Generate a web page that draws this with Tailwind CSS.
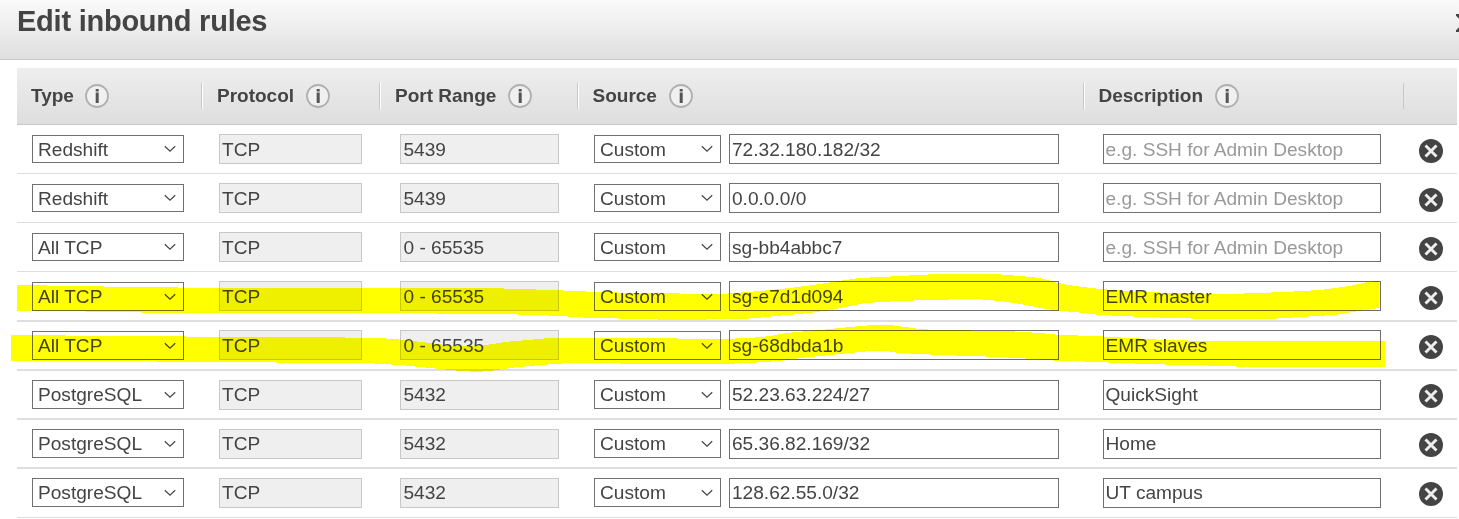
<!DOCTYPE html>
<html lang="en">
<head>
<meta charset="utf-8">
<title>Edit inbound rules</title>
<script src="https://cdn.jsdelivr.net/npm/@tailwindcss/browser@4"></script>
</head>
<body class="relative h-[519px] w-[1459px] overflow-hidden bg-white font-['Liberation_Sans',Arial,sans-serif] text-[#444]">
<svg class="hidden">
  <symbol id="info" viewBox="0 0 24 24"><circle cx="12" cy="12" r="11" fill="#f0f0f0" stroke="#b0b0b0" stroke-width="1.800"/><rect x="10.700" y="5" width="3" height="2.500" fill="#555"/><rect x="10.700" y="8.500" width="3" height="10.500" fill="#555"/></symbol>
  <symbol id="remove" viewBox="0 0 24 24"><circle cx="12" cy="12" r="12" fill="#444"/><path d="M6.500 6.500l11 11M17.500 6.500l-11 11" stroke="#eee" stroke-width="2.900"/></symbol>
  <symbol id="chevron" viewBox="0 0 12 8"><path d="M.8 1.200L6 6.200l5.200-5" fill="none" stroke="#444" stroke-width="1.200"/></symbol>
</svg>
<header class="flex h-15 justify-between border-b border-[#c8c8c8] bg-linear-to-b from-[#fafafa] to-[#dfdfdf] pl-[17px]">
  <h1 class="pt-1 text-[29px] leading-[34px] font-bold tracking-[-0.24px] whitespace-nowrap">Edit inbound rules</h1>
  <svg class="mt-3.5 -mr-4 h-[18px] w-[19px] shrink-0" viewBox="0 0 19 18"><path d="M0 -1l20 20M20 -1l-20 20" stroke="#444" stroke-width="4"/></svg>
</header>
<main class="mt-2 ml-[17px] w-[1440px]">
  <div class="grid h-[57px] grid-cols-[186px_178px_198px_506px_319px_53px] border-b border-[#c8c8c8] bg-linear-to-b from-[#eee] to-[#dedede] pt-[15px] text-[19px] leading-[26px] font-bold whitespace-nowrap">
    <div class="flex h-[26px] border-r border-white"><div class="flex w-full gap-[11px] border-r border-[#c8c8c8] pl-3.5"><span>Type</span><svg class="mt-px size-6"><use href="#info"/></svg></div></div>
    <div class="flex h-[26px] border-r border-white"><div class="flex w-full gap-3 border-r border-[#c8c8c8] pl-3.5"><span>Protocol</span><svg class="mt-px size-6"><use href="#info"/></svg></div></div>
    <div class="flex h-[26px] border-r border-white"><div class="flex w-full gap-3 border-r border-[#c8c8c8] pl-3.5"><span>Port Range</span><svg class="mt-px size-6"><use href="#info"/></svg></div></div>
    <div class="flex h-[26px] border-r border-white"><div class="flex w-full gap-3 border-r border-[#c8c8c8] pl-[13.500px]"><span>Source</span><svg class="mt-px size-6"><use href="#info"/></svg></div></div>
    <div class="flex h-[26px] gap-3 border-r border-[#c8c8c8] pl-[13.500px]"><span>Description</span><svg class="mt-px size-6"><use href="#info"/></svg></div>
  </div>
  <div id="rules"></div>
</main>
<svg class="absolute inset-0 mix-blend-multiply" width="1459" height="519" fill="#ff0" shape-rendering="crispEdges">
  <polygon points="17,285 47,285 47,286 104,286 104,287 178,287 178,288 487,288 521,289 550,290 577,291 594,292 640,293 720,294 735,293 760,291 790,288 820,284 838,281 860,278 880,277 937,274 995,274 1020,276 1040,278 1058,283 1075,286 1100,289 1140,292 1178,293 1230,294 1285,292 1320,290 1350,286 1367,282 1379,281 1379,308 1365,310 1335,315 1300,317 1271,319 1206,319 1145,317 1100,315 1075,312 1060,311 1040,308 1020,304 1000,301 975,299 925,300 900,301 865,303 850,306 830,310 810,313 787,315 745,319 668,320 645,319 590,318 560,316 535,315 500,314 370,313 141,313 141,312 85,312 85,311 17,311"/>
  <polygon points="11,335 65,335 65,336 186,336 186,337 345,337 345,338 380,338 405,340 430,343 455,346 480,346 505,342 550,338 635,338 720,339 750,338 770,336 785,333 820,330 860,326 873,325 890,325 905,327 920,329 935,330 1007,331 1040,333 1060,335 1095,336 1130,338 1165,340 1210,341 1385,341 1385,367 1236,367 1236,366 1180,365 1120,363 1070,361 1060,361 1033,359 1000,357 940,355 900,353 885,351 870,351 850,353 820,356 800,358 780,361 750,363 720,364 670,364 570,363 540,365 510,368 490,371 475,372 450,370 420,367 400,365 364,363 276,363 276,362 155,362 155,361 11,361"/>
</svg>
<script>
const rules = [
  ['Redshift','5439','72.32.180.182/32',''],
  ['Redshift','5439','0.0.0.0/0',''],
  ['All TCP','0 - 65535','sg-bb4abbc7',''],
  ['All TCP','0 - 65535','sg-e7d1d094','EMR master'],
  ['All TCP','0 - 65535','sg-68dbda1b','EMR slaves'],
  ['PostgreSQL','5432','52.23.63.224/27','QuickSight'],
  ['PostgreSQL','5432','65.36.82.169/32','Home'],
  ['PostgreSQL','5432','128.62.55.0/32','UT campus'],
];
const rowClass = ['h-[49px] border-b','h-[49px] border-b','h-[49px] border-b','h-[50px] border-b-2','h-[49px] border-b-2','h-[49px] border-b-2','h-[49px] border-b-2','h-[49px] border-b'];
document.getElementById('rules').innerHTML = rules.map(([type, port, source, desc], i) => {
  const late = i > 3, last = i > 4;
  const sel = (late ? 'mt-[9px] ' : 'mt-2.5 ') + (i < 3 ? 'h-7' : 'h-[29px]');
  const inp = (i === 4 ? 'mt-2 leading-[29px]' : 'mt-[9px] ' + (last ? 'leading-[27px]' : 'leading-[29px]')) + ' h-[30px]';
  const select = (t, w) => `<div class="${sel} ${w} flex shrink-0 justify-between border border-[#707070] pr-[7px] pl-[5px] leading-[27px]"><span>${t}</span><svg class="${i < 3 ? 'mt-[9px]' : 'mt-2.5'} h-2 w-3"><use href="#chevron"/></svg></div>`;
  const input = (t, c) => `<div class="${inp} ${c} shrink-0 border"><span>${t}</span></div>`;
  return `<div class="${rowClass[i]} grid grid-cols-[202px_181px_194px_509px_354px] border-[#dedede] text-[19.100px] whitespace-nowrap">
    <div class="pl-[15px]">${select(type, 'w-[152px]')}</div>
    ${input('TCP', 'w-[143px] border-[#c8c8c8] bg-[#efefef] pl-0.5')}
    ${input(port, 'w-[159px] border-[#c8c8c8] bg-[#efefef] pl-[2.500px]')}
    <div class="flex gap-2">${select('Custom', 'w-[127px]')}${input(source, 'w-[330px] border-[#707070] pl-0.5')}</div>
    <div class="flex gap-[38px]">${input(desc || 'e.g. SSH for Admin Desktop', desc ? 'w-[278px] border-[#707070] pl-[1.500px]' : 'w-[278px] border-[#707070] pl-[1.500px] text-[#999]')}<svg class="${late ? 'mt-[13px]' : 'mt-3.5'} size-6"><use href="#remove"/></svg></div>
  </div>`;
}).join('');
</script>
</body>
</html>
